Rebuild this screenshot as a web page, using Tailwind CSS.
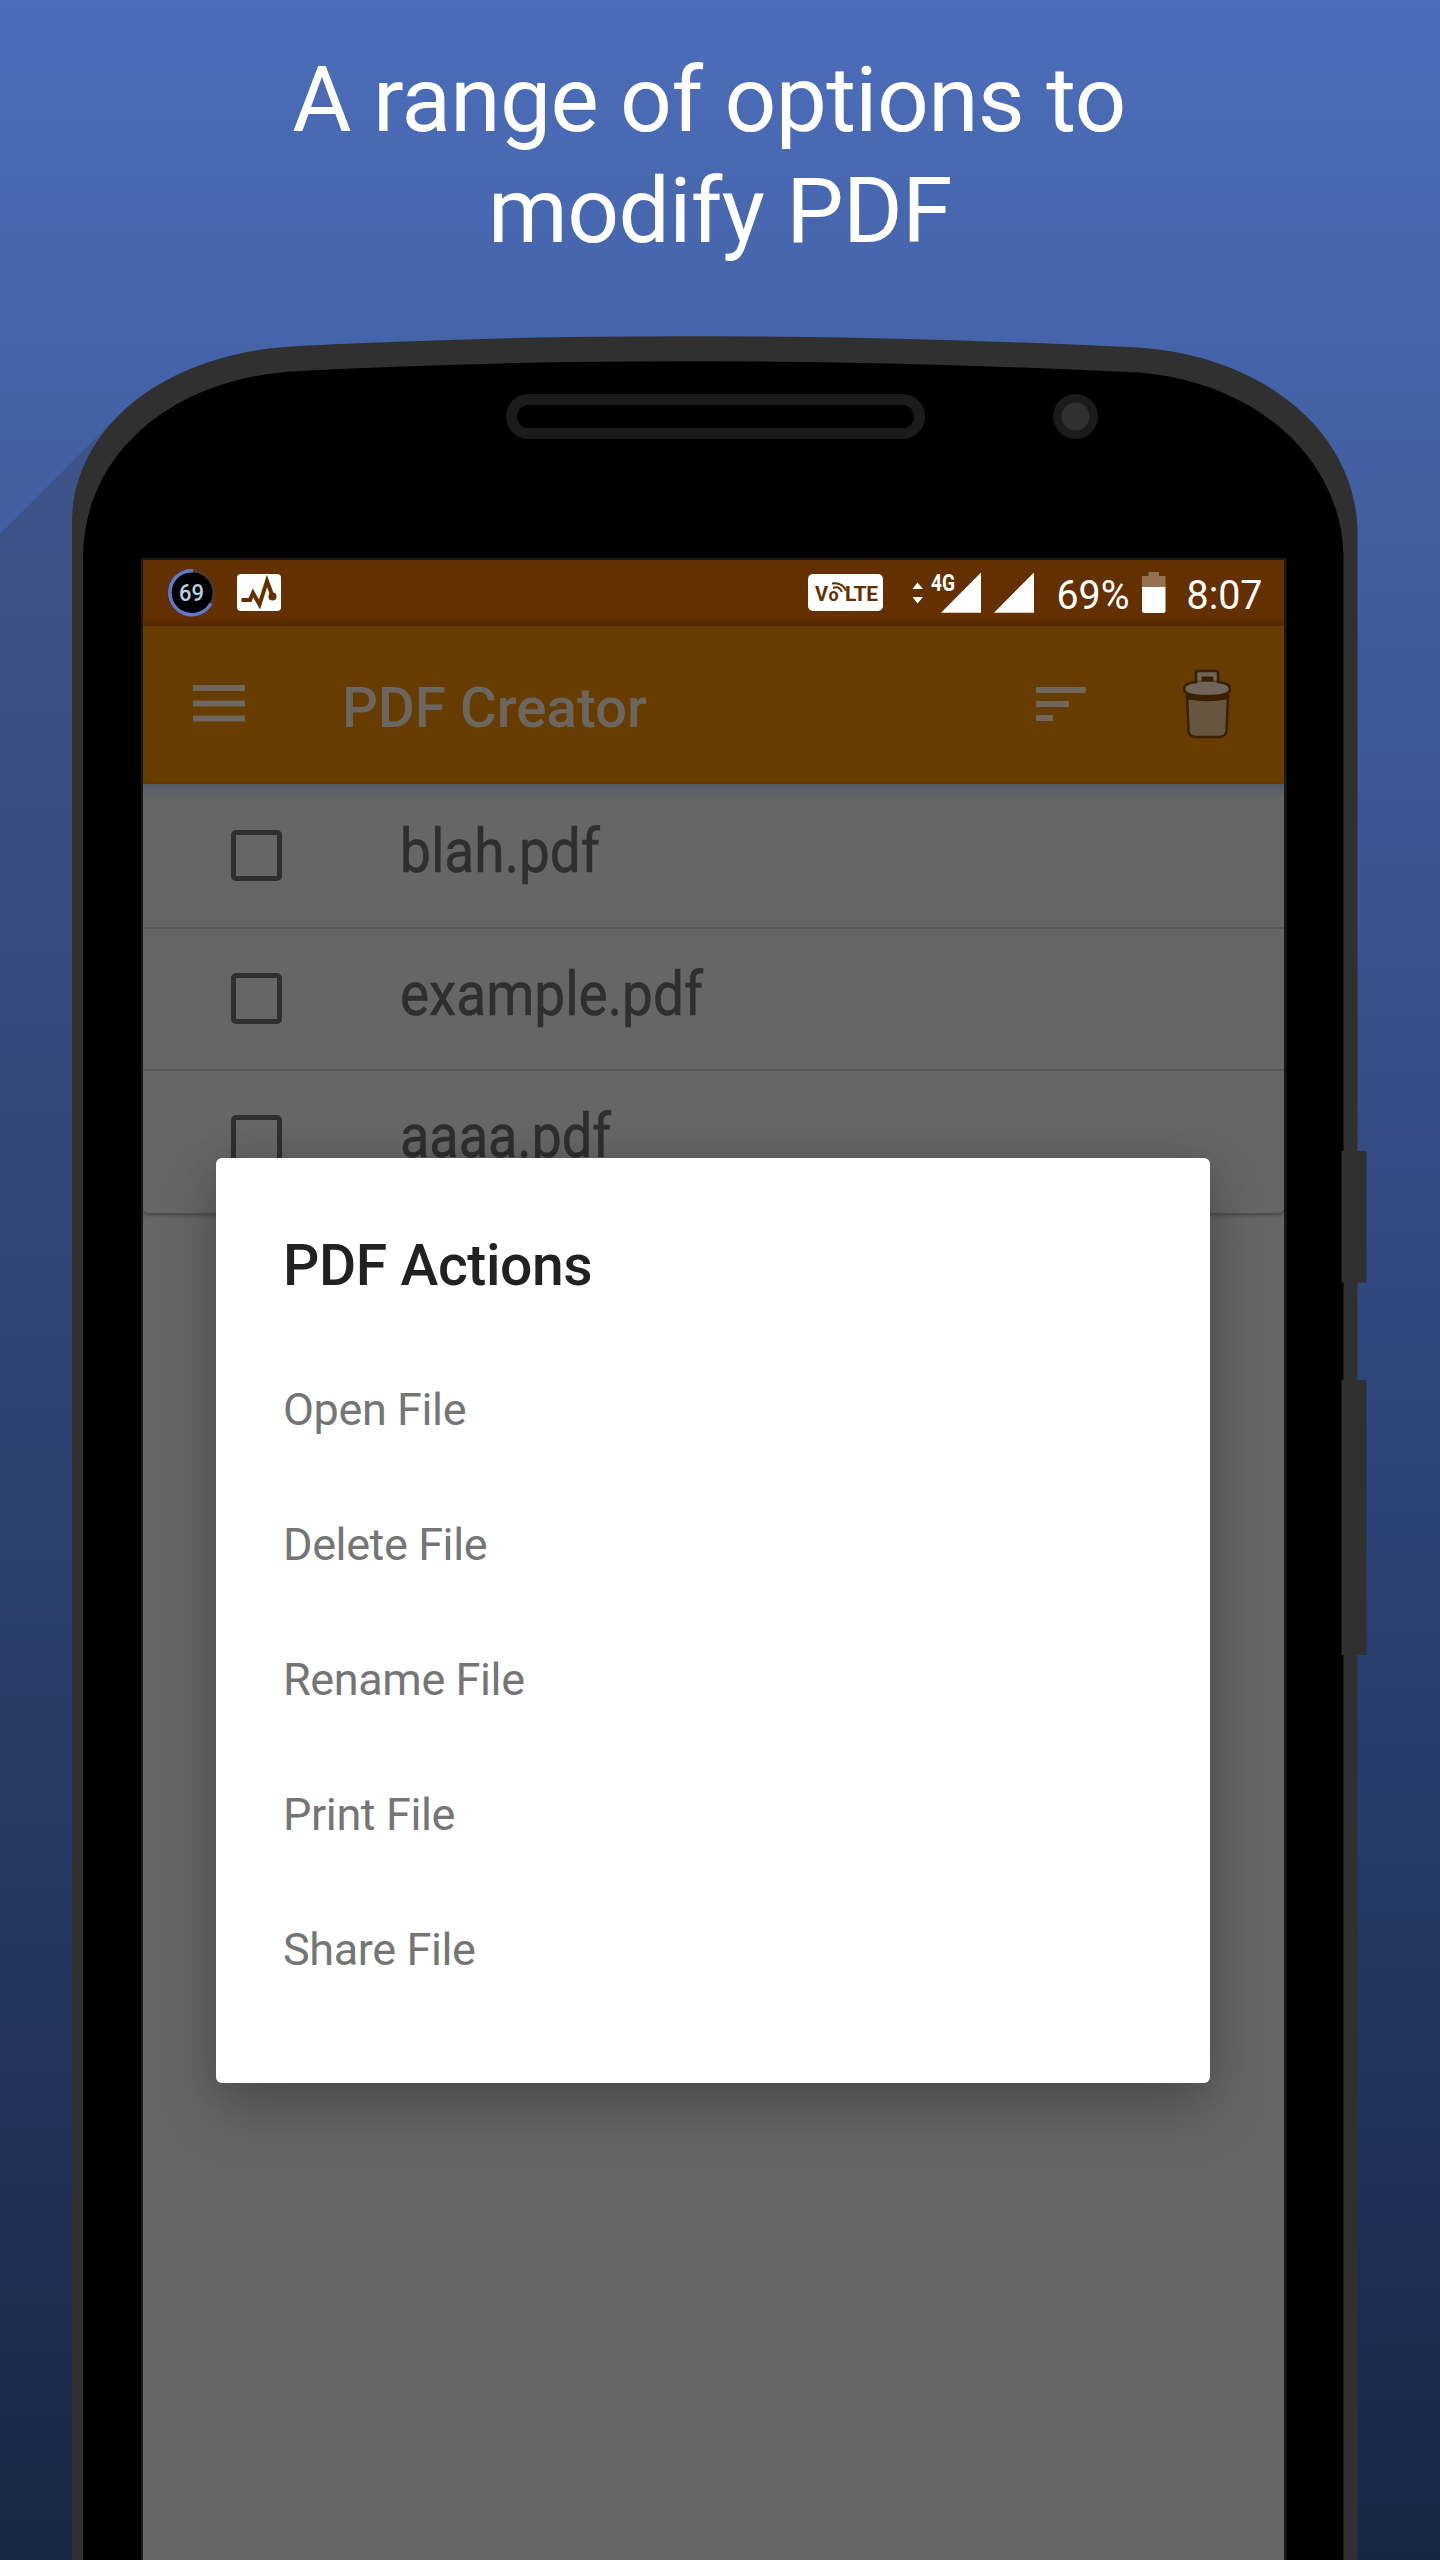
<!DOCTYPE html>
<html lang="en">
<head>
<meta charset="utf-8">
<title>PDF Creator</title>
<script src="https://cdn.jsdelivr.net/npm/@tailwindcss/browser@4"></script>
</head>
<body class="bg-[#182645]">
<main class="relative isolate flex h-[2560px] w-[1440px] flex-col overflow-hidden bg-[linear-gradient(180deg,#4c6dba_0px,#4665ac_300px,#405c9c_600px,#30497e_1280px,#253a67_1850px,#182645_2560px)] font-['Roboto',sans-serif]">

  <!-- Phone body -->
  <svg class="absolute inset-0 -z-10" width="1440" height="2560" viewBox="0 0 1440 2560" aria-hidden="true">
    <defs>
      <linearGradient id="cast" x1="0" y1="0" x2="0" y2="1">
        <stop offset="0" stop-color="#303040" stop-opacity=".27"/>
        <stop offset=".5" stop-color="#303040" stop-opacity=".12"/>
        <stop offset="1" stop-color="#303040" stop-opacity=".03"/>
      </linearGradient>
    </defs>
    <path d="M0 534 110 424V2560H0Z" fill="url(#cast)"/>
    <path d="M72 2560V520C74 430 160 352 300 346Q680 326 1128 347C1260 352 1355 430 1357.500 530V2560Z" fill="#303030"/>
    <path d="M83 2560V555C85 455 170 377 300 371Q680 351 1128 372C1250 377 1341 455 1343.500 555V2560Z" fill="#000"/>
    <rect x="1341.500" y="1151" width="25" height="131.500" fill="#303030"/>
    <rect x="1341.500" y="1380" width="25" height="275" fill="#303030"/>
    <rect x="511.500" y="399.500" width="408" height="34" rx="17" fill="#000" stroke="#1b1b1b" stroke-width="11"/>
    <circle cx="1075.500" cy="416.500" r="22.500" fill="#1b1b1b"/>
    <circle cx="1075.500" cy="416.500" r="14" fill="#303030"/>
    <rect x="141" y="558" width="1145.500" height="2010" fill="#1a1a1a"/>
  </svg>

  <header class="h-[560px] pt-[45px] text-center text-[91px] leading-[111px] tracking-[-0.6px] text-white">
    <h1><span class="block pr-[22px]">A range of options to</span><span class="block">modify PDF</span></h1>
  </header>

  <section class="relative ml-[143px] flex h-[2000px] w-[1141px] flex-col bg-[#666]">
    <!-- Status bar -->
    <div class="flex h-[66px] items-start bg-[linear-gradient(180deg,#643000_56px,#542700_66px)] text-white">
      <svg width="1141" height="66" viewBox="143 560 1141 66" font-family="Roboto, sans-serif">
        <circle cx="192" cy="592.700" r="22.500" fill="#000"/>
        <circle cx="192" cy="592.700" r="22" fill="none" stroke="#55382b" stroke-width="3"/>
        <path d="M193 570.700A22 22 0 1 0 211 603.500" fill="none" stroke="#5c79cf" stroke-width="3.500"/>
        <text x="179" y="601" font-size="23" font-weight="500" fill="#b9cfe0" textLength="25" lengthAdjust="spacingAndGlyphs">69</text>
        <rect x="237" y="574" width="44" height="37" rx="4" fill="#fff"/>
        <path d="M241.500 600h8.500l3-7 6.500 11.500L267 581l5.500 15" fill="none" stroke="#643000" stroke-width="4"/>
        <circle cx="272.500" cy="596.500" r="4" fill="#643000"/>
        <rect x="808" y="574" width="75" height="37" rx="5" fill="#fff"/>
        <g fill="#643000" font-weight="700">
          <text x="815" y="601" font-size="20">V</text>
          <text x="828.500" y="601" font-size="18">o</text>
          <text x="845" y="601" font-size="21" textLength="33">LTE</text>
        </g>
        <path d="M833 588q6-2.500 9 4M832 583.500q10-1.500 14 7" fill="none" stroke="#643000" stroke-width="2"/>
        <path d="M912.500 589 917.500 582.500 923 589ZM912.500 597 917.500 603.500 923 597Z" fill="#fff"/>
        <path d="M941 612.700H981V572.500ZM994 612.700H1034V572.500Z" fill="#fff"/>
        <text x="931" y="591" font-size="23" font-weight="700" fill="#fff" textLength="24" lengthAdjust="spacingAndGlyphs">4G</text>
        <text x="1056.500" y="608.500" font-size="40" fill="#fff" textLength="73" lengthAdjust="spacingAndGlyphs">69%</text>
        <path d="M1142 588V576h6.500v-4h10.500v4h6.500v12Z" fill="#947152"/>
        <path d="M1142 587h23.500v24q0 2-2 2H1144q-2 0-2-2Z" fill="#fff"/>
        <text x="1186.500" y="608.500" font-size="40" fill="#fff" textLength="76" lengthAdjust="spacingAndGlyphs">8:07</text>
      </svg>
    </div>

    <!-- App bar -->
    <div class="flex h-[158px] items-center bg-[#663c00] pb-[2px]">
      <svg class="ml-[50px]" width="52" height="38" viewBox="0 0 52 38" fill="#6f665d"><path d="M0 0h52v6H0zM0 15.500h52v6H0zM0 30.500h52v6H0z"/></svg>
      <h2 class="ml-[98px] pt-[5px] text-[55px] leading-none font-medium"><svg class="overflow-visible" width="310" height="56"><text x="-1" y="48" font-size="56" font-weight="500" fill="#6c6660" textLength="305" lengthAdjust="spacingAndGlyphs">PDF Creator</text></svg></h2>
      <svg class="ml-[383px]" width="50" height="34" viewBox="0 0 50 34" fill="#6f665d"><path d="M0 0h50v6H0zM0 14h33v6H0zM0 28h17v6H0z"/></svg>
      <svg class="ml-[96px]" width="50" height="70" viewBox="0 0 50 70" stroke="#3a2002" stroke-width="2.500" stroke-linejoin="round">
        <path d="M5 27H46L44.500 62Q44 68 36 68H15Q7 68 6.500 62Z" fill="#66563f"/>
        <path d="M5 26Q25 31 46 26V29Q25 33 5 29Z" fill="#3a2002"/>
        <path d="M14 14V4Q14 2 16 2H34Q36 2 36 4V14Z" fill="#70655a"/>
        <path d="M14 13H36Q48 14 48 20C48 25 38 27 25 27S2 25 2 20Q2 14 14 13Z" fill="#70655a"/>
        <path d="M15.500 14.500h19" stroke="#70655a" stroke-width="4"/>
        <path d="M20 8h11v4H20z" fill="#3a2002" stroke-width="1"/>
      </svg>
    </div>

    <!-- File list -->
    <ul class="flex flex-col rounded-b-md bg-[linear-gradient(180deg,#555a62_0px,#5f6267_9px,#666_15px)] shadow-[0_2px_4px_rgba(0,0,0,0.35)]">
      <li class="flex h-[144.500px] items-start border-b-2 border-[#575757] pl-[88px]">
        <span class="mt-[46px] size-[51px] rounded-[5px] border-[5px] border-[#2f2f2f]"></span>
        <svg class="ml-[118px] overflow-visible" width="320" height="120" fill="#2f2f2f" stroke="#2f2f2f" stroke-width=".6"><text x="0" y="88" font-size="62" textLength="200" lengthAdjust="spacingAndGlyphs">blah.pdf</text></svg>
      </li>
      <li class="flex h-[142.500px] items-start border-b-2 border-[#575757] pl-[88px]">
        <span class="mt-[44px] size-[51px] rounded-[5px] border-[5px] border-[#2f2f2f]"></span>
        <svg class="ml-[118px] overflow-visible" width="320" height="120" fill="#2f2f2f" stroke="#2f2f2f" stroke-width=".6"><text x="0" y="86" font-size="62" textLength="303" lengthAdjust="spacingAndGlyphs">example.pdf</text></svg>
      </li>
      <li class="flex h-[141.500px] items-start pl-[88px]">
        <span class="mt-[44px] size-[51px] rounded-[5px] border-[5px] border-[#2f2f2f]"></span>
        <svg class="ml-[118px] overflow-visible" width="320" height="120" fill="#2f2f2f" stroke="#2f2f2f" stroke-width=".6"><text x="0" y="86" font-size="62" textLength="211" lengthAdjust="spacingAndGlyphs">aaaa.pdf</text></svg>
      </li>
    </ul>

    <!-- Dialog -->
    <div class="absolute top-[597.500px] left-[73px] flex h-[925px] w-[994px] flex-col rounded-[6px] bg-white px-[67px] pt-[72px] shadow-[0_28px_56px_rgba(0,0,0,0.22),0_0_36px_rgba(0,0,0,0.12)]">
      <h3 class="text-[57px] leading-[72px] font-medium tracking-[-0.4px] text-[#212121]">PDF Actions</h3>
      <ul class="flex flex-col pt-[40px] text-[45px] leading-[135px] tracking-[-0.4px] text-[#757575]">
        <li>Open File</li>
        <li>Delete File</li>
        <li>Rename File</li>
        <li>Print File</li>
        <li>Share File</li>
      </ul>
    </div>
  </section>
</main>
</body>
</html>
